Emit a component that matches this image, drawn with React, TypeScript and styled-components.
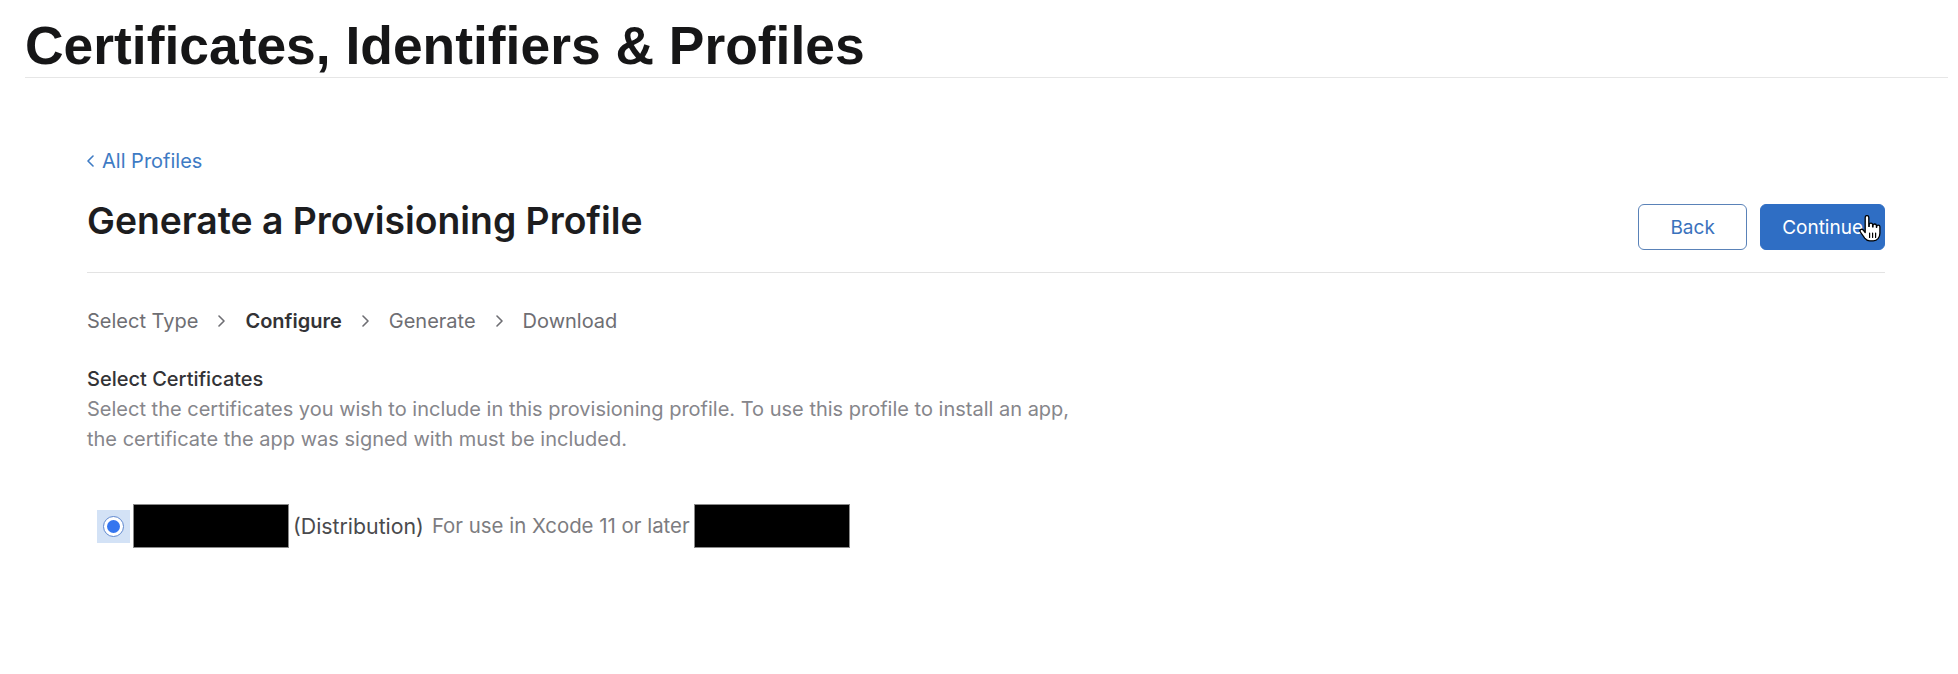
import styled, { createGlobalStyle } from "styled-components";

const GlobalStyle = createGlobalStyle`
  html, body {
    margin: 0;
    padding: 0;
    background: #ffffff;
  }
  body {
    font-family: Inter, "Liberation Sans", sans-serif;
    color: #1d1d1f;
    -webkit-font-smoothing: antialiased;
  }
`;

const PageHeader = styled.header`
  margin: 0 10px 0 25px;
  padding-top: 19px;
  border-bottom: 1px solid #e6e6e6;

  h1 {
    margin: 0 0 5px;
    font-family: "Liberation Sans", Arial, sans-serif;
    font-size: 53.4px;
    line-height: 53px;
    font-weight: 700;
    color: #161617;
  }
`;

const Main = styled.main`
  padding: 68px 73px 0 87px;
`;

const BackLink = styled.a`
  display: inline-flex;
  align-items: center;
  gap: 8px;
  font-size: 20px;
  line-height: 30px;
  color: #3e7bc4;
  text-decoration: none;
  cursor: pointer;
`;

const TitleRow = styled.div`
  display: flex;
  justify-content: space-between;
  align-items: flex-start;
  margin-top: 28px;
  padding-bottom: 22px;
  border-bottom: 1px solid #e3e3e3;

  h2 {
    margin: 0;
    font-size: 37.3px;
    line-height: 34px;
    font-weight: 600;
    color: #1d1d1f;
  }
`;

const Actions = styled.div`
  display: flex;
  gap: 13px;
`;

const Button = styled.button<{ $primary?: boolean }>`
  position: relative;
  height: 46px;
  min-width: 109px;
  padding: 0 21px;
  border-radius: 6px;
  font-family: inherit;
  font-size: 19px;
  cursor: pointer;
  border: 1px solid ${(p) => (p.$primary ? "#2f6ec4" : "#5a82b8")};
  background: ${(p) => (p.$primary ? "#2f6ec4" : "#ffffff")};
  color: ${(p) => (p.$primary ? "#ffffff" : "#3a72bd")};
`;

const Pointer = styled.svg`
  position: absolute;
  left: 98px;
  top: 10px;
`;

const Steps = styled.ol`
  display: flex;
  align-items: center;
  gap: 20px;
  list-style: none;
  margin: 33px 0 0;
  padding: 0;
  font-size: 20px;
  line-height: 30px;
  color: #6e6e73;
`;

const Step = styled.li<{ $current?: boolean }>`
  display: flex;
  align-items: center;
  gap: 20px;
  font-weight: ${(p) => (p.$current ? 600 : 400)};
  color: ${(p) => (p.$current ? "#333336" : "#6e6e73")};
`;

const StepArrow = styled.span`
  display: flex;
  color: #6e6e73;
`;

const Section = styled.section`
  margin-top: 28px;
  font-size: 20px;
  line-height: 30px;

  h3 {
    margin: 0;
    font-size: 20px;
    font-weight: 500;
    color: #333336;
  }

  p {
    margin: 0;
    color: #86868b;
    max-width: 1000px;
  }
`;

const CertRow = styled.label`
  display: flex;
  align-items: center;
  margin-top: 50px;
  padding-left: 10px;
  line-height: 30px;
`;

const RadioFocus = styled.span`
  display: flex;
  align-items: center;
  justify-content: center;
  width: 33px;
  height: 33px;
  background: #d3e2f6;
  margin-right: 3px;
`;

const Radio = styled.span`
  display: flex;
  align-items: center;
  justify-content: center;
  width: 19px;
  height: 19px;
  border-radius: 50%;
  border: 1.5px solid #5f88cf;
  background: #ffffff;

  &::after {
    content: "";
    width: 13px;
    height: 13px;
    border-radius: 50%;
    background: #3576ef;
  }
`;

const Redacted = styled.span<{ $width: number }>`
  display: inline-block;
  width: ${(p) => p.$width}px;
  height: 44px;
  box-sizing: border-box;
  background: #000000;
  border: 1px solid #8a8a8a;
`;

const CertType = styled.span`
  margin: 0 8px 0 4px;
  font-size: 21.3px;
  color: #4a4a4d;
`;

const CertNote = styled.span`
  margin-right: 4px;
  font-size: 20.4px;
  color: #7c7c80;
`;

function Chevron({ dir }: { dir: "left" | "right" }) {
  return (
    <svg width="7" height="12" viewBox="0 0 7 12" fill="none">
      <path
        d={dir === "right" ? "M1 1l5 5-5 5" : "M6 1L1 6l5 5"}
        stroke="currentColor"
        strokeWidth="1.6"
        strokeLinecap="round"
        strokeLinejoin="round"
      />
    </svg>
  );
}

const steps = ["Select Type", "Configure", "Generate", "Download"];

export default function App() {
  return (
    <>
      <GlobalStyle />
      <PageHeader>
        <h1>Certificates, Identifiers &amp; Profiles</h1>
      </PageHeader>
      <Main>
        <BackLink>
          <Chevron dir="left" />
          All Profiles
        </BackLink>

        <TitleRow>
          <h2>Generate a Provisioning Profile</h2>
          <Actions>
            <Button>Back</Button>
            <Button $primary>
              Continue
              <Pointer width="22" height="28" viewBox="0 0 22 28">
                <path
                  d="M6.2 2.4a1.8 1.8 0 0 1 3.6 0v9h.4V9.8a1.7 1.7 0 0 1 3.4 0v2.1h.4v-1.2a1.7 1.7 0 0 1 3.4 0v1.6h.3v-.5a1.6 1.6 0 0 1 3.2 0v6.4c0 4.2-2.6 7.6-6.6 7.6h-3.6c-2.2 0-3.7-1-5-2.7L1.4 17a1.7 1.7 0 0 1 2.7-2.1l2.1 2.6z"
                  fill="#ffffff"
                  stroke="#000000"
                  strokeWidth="1.3"
                  strokeLinejoin="round"
                />
                <path
                  d="M10.6 18v4.4M13.6 18v4.4M16.6 18v4.4"
                  stroke="#000000"
                  strokeWidth="1.2"
                  strokeLinecap="round"
                />
              </Pointer>
            </Button>
          </Actions>
        </TitleRow>

        <Steps>
          {steps.map((step, i) => (
            <Step key={step} $current={step === "Configure"}>
              {step}
              {i < steps.length - 1 && (
                <StepArrow>
                  <Chevron dir="right" />
                </StepArrow>
              )}
            </Step>
          ))}
        </Steps>

        <Section>
          <h3>Select Certificates</h3>
          <p>
            Select the certificates you wish to include in this provisioning
            profile. To use this profile to install an app, the certificate the
            app was signed with must be included.
          </p>
        </Section>

        <CertRow>
          <RadioFocus>
            <Radio />
          </RadioFocus>
          <Redacted $width={156} />
          <CertType>(Distribution)</CertType>
          <CertNote>For use in Xcode 11 or later</CertNote>
          <Redacted $width={156} />
        </CertRow>
      </Main>
    </>
  );
}
